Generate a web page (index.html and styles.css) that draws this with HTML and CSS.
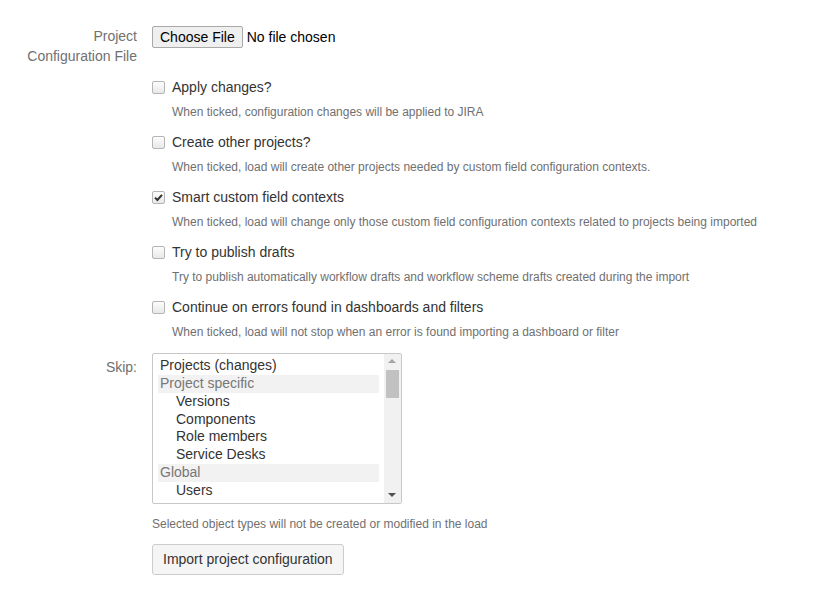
FILE: index.html
```html
<!DOCTYPE html>
<html>
<head>
<meta charset="utf-8">
<link rel="stylesheet" href="styles.css">
</head>
<body>
<form class="form">
  <div class="row file-row">
    <div class="label">Project<br>Configuration File</div>
    <div class="field file-field">
      <span class="btn-file">Choose File</span>
      <span class="file-name">No file chosen</span>
    </div>
  </div>

  <div class="row">
    <div class="label"></div>
    <div class="field checks">
      <div class="check">
        <div class="check-line"><span class="box"></span><span class="check-label">Apply changes?</span></div>
        <div class="desc">When ticked, configuration changes will be applied to JIRA</div>
      </div>
      <div class="check">
        <div class="check-line"><span class="box"></span><span class="check-label">Create other projects?</span></div>
        <div class="desc">When ticked, load will create other projects needed by custom field configuration contexts.</div>
      </div>
      <div class="check">
        <div class="check-line"><span class="box checked"><svg viewBox="0 0 13 13" width="13" height="13"><path d="M3 6.6 L5.4 9 L10 3.8" fill="none" stroke="#333" stroke-width="2"/></svg></span><span class="check-label">Smart custom field contexts</span></div>
        <div class="desc">When ticked, load will change only those custom field configuration contexts related to projects being imported</div>
      </div>
      <div class="check">
        <div class="check-line"><span class="box"></span><span class="check-label">Try to publish drafts</span></div>
        <div class="desc">Try to publish automatically workflow drafts and workflow scheme drafts created during the import</div>
      </div>
      <div class="check">
        <div class="check-line"><span class="box"></span><span class="check-label">Continue on errors found in dashboards and filters</span></div>
        <div class="desc">When ticked, load will not stop when an error is found importing a dashboard or filter</div>
      </div>
    </div>
  </div>

  <div class="row skip-row">
    <div class="label skip-label">Skip:</div>
    <div class="field">
      <div class="listbox">
        <div class="options">
          <div class="opt">Projects (changes)</div>
          <div class="opt group">Project specific</div>
          <div class="opt sub">Versions</div>
          <div class="opt sub">Components</div>
          <div class="opt sub">Role members</div>
          <div class="opt sub">Service Desks</div>
          <div class="opt group">Global</div>
          <div class="opt sub">Users</div>
          <div class="opt sub">Groups</div>
        </div>
        <div class="scrollbar">
          <span class="arrow up"></span>
          <span class="thumb"></span>
          <span class="arrow down"></span>
        </div>
      </div>
      <div class="hint">Selected object types will not be created or modified in the load</div>
      <span class="btn-submit">Import project configuration</span>
    </div>
  </div>
</form>
</body>
</html>
```

FILE: styles.css
```css
html, body {
  margin: 0;
  padding: 0;
  background: #fff;
}
body {
  font-family: "Liberation Sans", Arial, sans-serif;
  font-size: 14px;
  color: #333;
}
.form {
  padding-top: 26px;
}
.row {
  display: grid;
  grid-template-columns: 137px 1fr;
  column-gap: 15px;
}
.label {
  text-align: right;
  color: #707070;
  line-height: 20px;
}
.file-row {
  height: 51px;
}
.file-field {
  display: flex;
  align-items: flex-start;
}
.btn-file {
  display: inline-block;
  box-sizing: border-box;
  height: 22px;
  line-height: 20px;
  padding: 0 7px;
  border: 1px solid #a9a9a9;
  background: #efefef;
  border-radius: 2px;
  color: #000;
}
.file-name {
  margin-left: 4px;
  line-height: 22px;
  color: #000;
}
.checks {
  display: flex;
  flex-direction: column;
}
.check {
  height: 55px;
}
.check-line {
  display: flex;
  align-items: center;
  height: 20px;
}
.box {
  box-sizing: border-box;
  width: 13px;
  height: 13px;
  border: 1px solid #b5b5b5;
  border-radius: 2px;
  background: linear-gradient(#fdfdfd, #e8e8e8);
  margin-right: 7px;
  flex: none;
  position: relative;
}
.box svg {
  position: absolute;
  left: -1px;
  top: -1px;
}
.check-label {
  color: #333;
}
.desc {
  margin-top: 7px;
  padding-left: 20px;
  font-size: 12px;
  line-height: 16px;
  color: #707070;
}
.skip-row {
  margin-top: 1px;
}
.skip-label {
  padding-top: 4px;
}
.listbox {
  box-sizing: border-box;
  width: 250px;
  height: 151px;
  border: 1px solid #c8c8c8;
  border-radius: 2px;
  display: flex;
  overflow: hidden;
}
.options {
  flex: 1;
  padding: 3px 5px 0 5px;
  overflow: hidden;
}
.opt {
  height: 17.86px;
  line-height: 17.86px;
  padding-left: 2px;
  color: #333;
  white-space: nowrap;
}
.opt.group {
  background: #f2f2f2;
  color: #777;
}
.opt.sub {
  padding-left: 18px;
}
.scrollbar {
  width: 17px;
  flex: none;
  background: #f1f1f1;
  position: relative;
}
.thumb {
  position: absolute;
  left: 2px;
  top: 16px;
  width: 13px;
  height: 28px;
  background: #c1c1c1;
}
.arrow {
  position: absolute;
  left: 4px;
  width: 0;
  height: 0;
  border-left: 4px solid transparent;
  border-right: 4px solid transparent;
}
.arrow.up {
  top: 5px;
  border-bottom: 4px solid #a3a3a3;
}
.arrow.down {
  bottom: 6px;
  border-top: 4px solid #505050;
}
.hint {
  margin-top: 12px;
  font-size: 12px;
  line-height: 16px;
  color: #707070;
}
.btn-submit {
  display: inline-block;
  box-sizing: border-box;
  margin-top: 12px;
  height: 31px;
  line-height: 29px;
  padding: 0 10px;
  border: 1px solid #ccc;
  border-radius: 3px;
  background: #f5f5f5;
  color: #333;
}
```
